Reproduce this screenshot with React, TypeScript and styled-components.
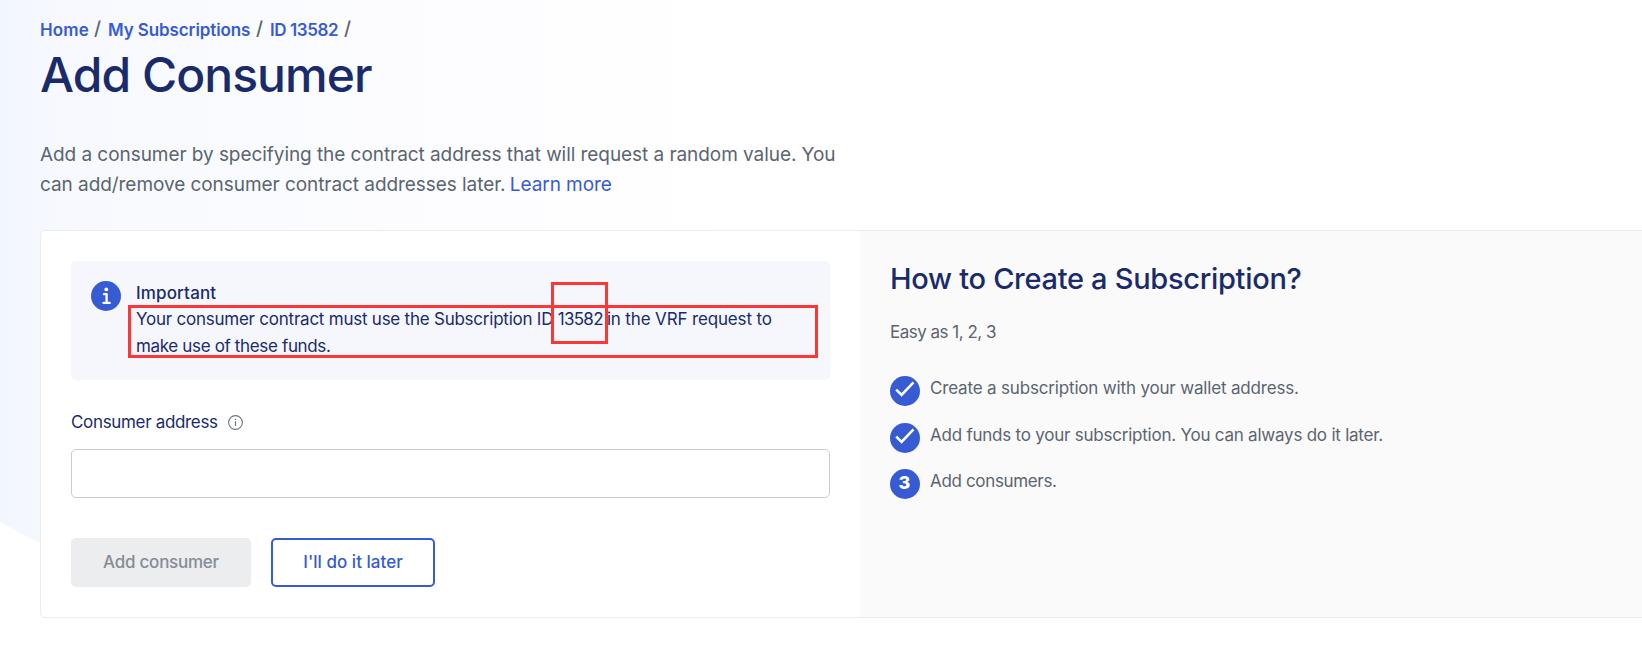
import React from "react";
import styled, { createGlobalStyle } from "styled-components";

const colors = {
  blue: "#375bd2",
  navy: "#1a2b6b",
  grey: "#5a6570",
  red: "#fd3636",
};

const GlobalStyle = createGlobalStyle`
  *, *::before, *::after { box-sizing: border-box; }
  body {
    margin: 0;
    overflow: hidden;
    background: #fff;
    color: ${colors.grey};
    font-family: Inter, "Liberation Sans", sans-serif;
    font-size: 17px;
    line-height: 26px;
  }
  h1, h2, p, ul { margin: 0; padding: 0; }
`;

const Page = styled.div`
  position: relative;
  height: 654px;
  padding: 17px 0 0 40px;
  overflow: hidden;
`;

const Backdrop = styled.div`
  position: absolute;
  inset: 0 auto auto 0;
  z-index: -1;
  width: 780px;
  height: 600px;
  background: linear-gradient(90deg, #f2f6ff 0, #f7f9fe 70px, #fafbfe 250px, #fdfdff 480px, #fff 740px);
  clip-path: polygon(0 0, 100% 0, 100% 600px, 147px 600px, 0 522px);
`;

const Spaced = styled.span<{ $ls?: number }>`
  letter-spacing: ${({ $ls = 0 }) => $ls}px;
`;

const Breadcrumbs = styled.nav`
  display: flex;
  height: 26px;
`;

const Crumb = styled.a<{ $width: number; $ls: number }>`
  width: ${({ $width }) => $width}px;
  color: ${colors.blue};
  font-weight: 600;
  letter-spacing: ${({ $ls }) => $ls}px;
  white-space: nowrap;
`;

const Slash = styled.span<{ $width: number }>`
  width: ${({ $width }) => $width}px;
  padding-left: 1px;
  font-size: 19px;
  line-height: 24px;
  font-weight: 500;
`;

const Title = styled.h1`
  margin-top: 2px;
  color: ${colors.navy};
  font-size: 48px;
  font-weight: 500;
  line-height: 60px;
  letter-spacing: -0.95px;
`;

const Intro = styled.p`
  margin-top: 35px;
  font-size: 19px;
  line-height: 30px;
  letter-spacing: -0.06px;
  white-space: nowrap;
`;

const Link = styled.a`
  margin-left: -1px;
  color: ${colors.blue};
`;

const Card = styled.section`
  display: flex;
  width: 1640px;
  height: 388px;
  margin-top: 30px;
  border: 1px solid #ebecee;
  border-radius: 5px;
  background: #fff;
`;

const FormPanel = styled.div`
  width: 819px;
  padding: 30px;
`;

const Alert = styled.div`
  position: relative;
  display: flex;
  gap: 15px;
  height: 119px;
  padding: 19px 20px;
  border-radius: 5px;
  background: #f5f7fd;
  color: ${colors.navy};
`;

const AlertIcon = styled.svg`
  flex: none;
  width: 30px;
  height: 30px;
  margin-top: 1px;
`;

const AlertTitle = styled.div`
  font-weight: 500;
  letter-spacing: 0.15px;
`;

const AlertText = styled.p`
  line-height: 27px;
  white-space: nowrap;
`;

const Marker = styled.div<{ $x: number; $y: number; $w: number; $h: number }>`
  position: absolute;
  left: ${({ $x }) => $x}px;
  top: ${({ $y }) => $y}px;
  width: ${({ $w }) => $w}px;
  height: ${({ $h }) => $h}px;
  border: 3px solid ${colors.red};
`;

const Label = styled.label`
  display: flex;
  align-items: center;
  gap: 10px;
  margin-top: 29px;
  color: ${colors.navy};
  letter-spacing: -0.33px;
`;

const Input = styled.input`
  display: block;
  width: 100%;
  height: 49px;
  margin-top: 14px;
  border: 1px solid #cbccce;
  border-radius: 5px;
  background: #fff;
`;

const Actions = styled.div`
  display: flex;
  gap: 20px;
  margin-top: 40px;
`;

const Button = styled.button<{ $outline?: boolean }>`
  width: ${({ $outline }) => ($outline ? 164 : 180)}px;
  height: 49px;
  padding: 0 0 2px;
  border: ${({ $outline }) => ($outline ? `2px solid ${colors.blue}` : "0")};
  border-radius: 5px;
  background: ${({ $outline }) => ($outline ? "#fff" : "#ebedee")};
  color: ${({ $outline }) => ($outline ? colors.blue : "#858c96")};
  font: 500 17px Inter, sans-serif;
  letter-spacing: ${({ $outline }) => ($outline ? 0.03 : -0.25)}px;
`;

const HelpPanel = styled.aside`
  flex: 1;
  padding: 28px 30px;
  border-radius: 0 5px 5px 0;
  background: #fafafa;
`;

const HelpTitle = styled.h2`
  color: ${colors.navy};
  font-size: 29px;
  font-weight: 500;
  line-height: 40px;
  letter-spacing: -0.3px;
`;

const HelpLead = styled.p`
  margin-top: 20px;
  letter-spacing: -0.5px;
`;

const Steps = styled.ul`
  display: grid;
  grid-template-rows: 47px 46px 30px;
  margin-top: 31px;
  list-style: none;
`;

const Step = styled.li<{ $ls: number }>`
  display: flex;
  gap: 10px;
  letter-spacing: ${({ $ls }) => $ls}px;
`;

const StepBadge = styled.span`
  display: grid;
  place-items: center;
  width: 30px;
  height: 30px;
  padding: 0 1px 2px 0;
  border-radius: 50%;
  background: ${colors.blue};
  color: #fff;
  font-size: 18px;
  font-weight: 800;
  letter-spacing: 0;
`;

const StepText = styled.span`
  margin-top: -1px;
`;

const Check = () => (
  <svg width="30" height="28" viewBox="0 0 30 28" fill="none" stroke="#fff" strokeWidth="2.6">
    <path d="M6.2 13.6 11.6 19 23.5 6.4" />
  </svg>
);

export default function App() {
  return (
    <Page>
      <GlobalStyle />
      <Backdrop />
      <Breadcrumbs>
        <Crumb $width={53} $ls={0.1}>Home</Crumb>
        <Slash $width={15}>/</Slash>
        <Crumb $width={147} $ls={-0.1}>My Subscriptions</Crumb>
        <Slash $width={15}>/</Slash>
        <Crumb $width={73} $ls={-0.4}>ID 13582</Crumb>
        <Slash $width={14}>/</Slash>
      </Breadcrumbs>
      <Title>Add Consumer</Title>
      <Intro>
        Add a consumer by specifying the contract address that will request a random value. You
        <br />
        can add/remove consumer contract addresses later. <Link>Learn more</Link>
      </Intro>
      <Card>
        <FormPanel>
          <Alert>
            <AlertIcon viewBox="0 0 30 30">
              <circle cx="15" cy="15" r="15" fill={colors.blue} />
              <circle cx="15.3" cy="8.4" r="1.9" fill="#fff" />
              <path d="M12.9 13.2H15.6V21.8M12.4 21.9H18.7" fill="none" stroke="#fff" strokeWidth="2.3" strokeLinecap="round" strokeLinejoin="round" />
            </AlertIcon>
            <div>
              <AlertTitle>Important</AlertTitle>
              <AlertText>
                <Spaced $ls={-0.235}>Your consumer contract must use the Subscription ID </Spaced>
                <Spaced $ls={-0.72}>13582 </Spaced>
                <Spaced $ls={-0.15}>in the VRF request to</Spaced>
                <br />
                <Spaced $ls={-0.35}>make use of these funds.</Spaced>
              </AlertText>
            </div>
            <Marker $x={57} $y={44} $w={690} $h={53} />
            <Marker $x={480} $y={21} $w={57} $h={62} />
          </Alert>
          <Label htmlFor="consumer-address">
            Consumer address
            <svg width="15" height="15" viewBox="0 0 15 15" fill="none" stroke="#6d7380">
              <circle cx="7.5" cy="7.5" r="6.9" strokeWidth="1.1" />
              <path d="M7.5 6.2V11M7.5 3.8V5" strokeWidth="1.2" />
            </svg>
          </Label>
          <Input id="consumer-address" />
          <Actions>
            <Button disabled>Add consumer</Button>
            <Button $outline>I'll do it later</Button>
          </Actions>
        </FormPanel>
        <HelpPanel>
          <HelpTitle>How to Create a Subscription?</HelpTitle>
          <HelpLead>Easy as 1, 2, 3</HelpLead>
          <Steps>
            <Step $ls={-0.17}>
              <StepBadge><Check /></StepBadge>
              <StepText>Create a subscription with your wallet address.</StepText>
            </Step>
            <Step $ls={-0.23}>
              <StepBadge><Check /></StepBadge>
              <StepText>Add funds to your subscription. You can always do it later.</StepText>
            </Step>
            <Step $ls={-0.34}>
              <StepBadge>3</StepBadge>
              <StepText>Add consumers.</StepText>
            </Step>
          </Steps>
        </HelpPanel>
      </Card>
    </Page>
  );
}
